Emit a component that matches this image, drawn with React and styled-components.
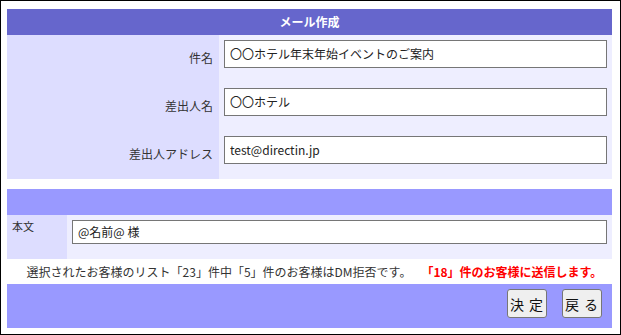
import styled, { createGlobalStyle } from "styled-components";

const GlobalStyle = createGlobalStyle`
  html, body {
    margin: 0;
    padding: 0;
    background: #fff;
  }
  body {
    font-family: "Noto Sans CJK JP", "Noto Sans", sans-serif;
    font-size: 12px;
    color: #333;
  }
`;

const Frame = styled.div`
  box-sizing: border-box;
  width: 621px;
  height: 335px;
  border: 1px solid #000;
  padding: 8px 8px 6px 6px;
  display: flex;
  flex-direction: column;
`;

const TitleBar = styled.div`
  height: 26px;
  background: ${(p) => p.$bg || "#6666cc"};
  color: #fff;
  font-weight: bold;
  font-size: 12px;
  display: flex;
  align-items: center;
  justify-content: center;
`;

const FormGrid = styled.div`
  display: grid;
  grid-template-columns: ${(p) => p.$labelWidth}px 1fr;
`;

const LabelCell = styled.div`
  background: #ddddff;
  height: ${(p) => p.$h}px;
  display: flex;
  align-items: ${(p) => (p.$top ? "flex-start" : "center")};
  justify-content: ${(p) => (p.$top ? "flex-start" : "flex-end")};
  padding: ${(p) => (p.$top ? "3px 5px" : "0 6px 3px 0")};
  box-sizing: border-box;
  font-size: ${(p) => (p.$top ? "11px" : "12px")};
`;

const FieldCell = styled.div`
  background: #eeeeff;
  height: ${(p) => p.$h}px;
  padding: 5px 5px 0 5px;
  box-sizing: border-box;
`;

const TextInput = styled.input`
  display: block;
  box-sizing: border-box;
  width: 100%;
  height: ${(p) => p.$h}px;
  border: 1px solid #767676;
  border-radius: 0;
  padding: 0 5px;
  font-family: "Noto Sans CJK JP", sans-serif;
  font-size: ${(p) => p.$size}px;
  color: #222;
  background: #fff;
  outline: none;
`;

const Gap = styled.div`
  height: 10px;
`;

const Notice = styled.div`
  height: 26px;
  display: flex;
  align-items: center;
  justify-content: center;
  padding-left: 10px;
  font-size: 12px;
  color: #333;
  white-space: nowrap;
`;

const Alert = styled.span`
  color: #ff0000;
  font-weight: bold;
  margin-left: 10px;
`;

const ButtonBar = styled.div`
  height: 44px;
  background: #9999ff;
  display: flex;
  justify-content: flex-end;
  align-items: flex-start;
  gap: 15px;
  padding: 5px 10px 0 0;
  box-sizing: border-box;
`;

const Button = styled.button`
  width: 40px;
  height: 29px;
  padding: 0;
  background: #efefef;
  border: 1px solid #767676;
  border-radius: 3px;
  font-family: "Noto Sans CJK JP", sans-serif;
  font-size: 14px;
  letter-spacing: 1px;
  white-space: nowrap;
  color: #111;
  cursor: pointer;
`;

const fields = [
  { label: "件名", value: "〇〇ホテル年末年始イベントのご案内" },
  { label: "差出人名", value: "〇〇ホテル" },
  { label: "差出人アドレス", value: "test@directin.jp" },
];

export default function App() {
  return (
    <>
      <GlobalStyle />
      <Frame>
        <TitleBar>メール作成</TitleBar>
        <FormGrid $labelWidth={212}>
          {fields.map((f) => (
            <FieldRow key={f.label} label={f.label} value={f.value} />
          ))}
        </FormGrid>
        <Gap />
        <TitleBar $bg="#9999ff" />
        <FormGrid $labelWidth={60}>
          <LabelCell $h={44} $top>
            本文
          </LabelCell>
          <FieldCell $h={44}>
            <TextInput $h={24} $size={12} defaultValue="@名前@ 様" />
          </FieldCell>
        </FormGrid>
        <Notice>
          選択されたお客様のリスト「23」件中「5」件のお客様はDM拒否です。
          <Alert>「18」件のお客様に送信します。</Alert>
        </Notice>
        <ButtonBar>
          <Button>決 定</Button>
          <Button>戻 る</Button>
        </ButtonBar>
      </Frame>
    </>
  );
}

function FieldRow({ label, value }) {
  return (
    <>
      <LabelCell $h={48}>{label}</LabelCell>
      <FieldCell $h={48}>
        <TextInput $h={28} $size={12} defaultValue={value} />
      </FieldCell>
    </>
  );
}
